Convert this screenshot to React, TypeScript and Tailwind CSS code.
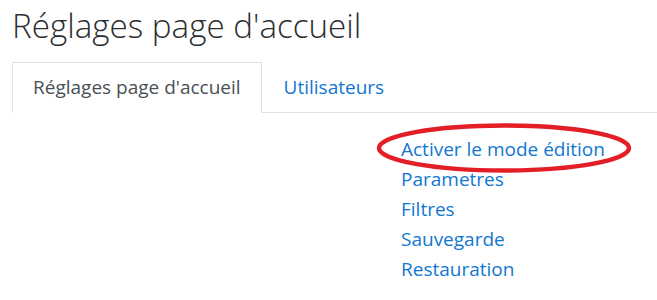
import React from "react";

export default function App() {
  const links = ["Activer le mode édition", "Parametres", "Filtres", "Sauvegarde", "Restauration"];
  return (
    <div className="w-[657px] h-[300px] bg-white overflow-hidden relative" style={{ fontFamily: '"Open Sans", "Noto Sans", sans-serif' }}>
      <div className="pl-[12px] pt-[4px]">
        <h1 className="text-[33.2px] leading-[43px] text-[#2b2e30] font-light">Réglages page d'accueil</h1>
        <div className="mt-[15px] flex border-b border-[#dee2e6] h-[51px]">
          <div className="border border-[#dee2e6] border-b-white -mb-px h-[51px] px-[20px] flex items-center bg-white">
            <span className="text-[19px] text-[#495057]">Réglages page d'accueil</span>
          </div>
          <div className="h-[50px] pl-[22px] flex items-center">
            <span className="text-[19px] text-[#1177d1]">Utilisateurs</span>
          </div>
        </div>
        <div className="pl-[389px] pt-[21px] flex flex-col">
          {links.map((l) => (
            <span key={l} className="text-[19px] leading-[30px] text-[#1177d1]">{l}</span>
          ))}
        </div>
      </div>
      <svg className="absolute left-0 top-0" width="657" height="300" viewBox="0 0 657 300">
        <ellipse cx="504" cy="148" rx="125" ry="22.5" fill="none" stroke="#e31e26" strokeWidth="4.5" />
      </svg>
    </div>
  );
}
